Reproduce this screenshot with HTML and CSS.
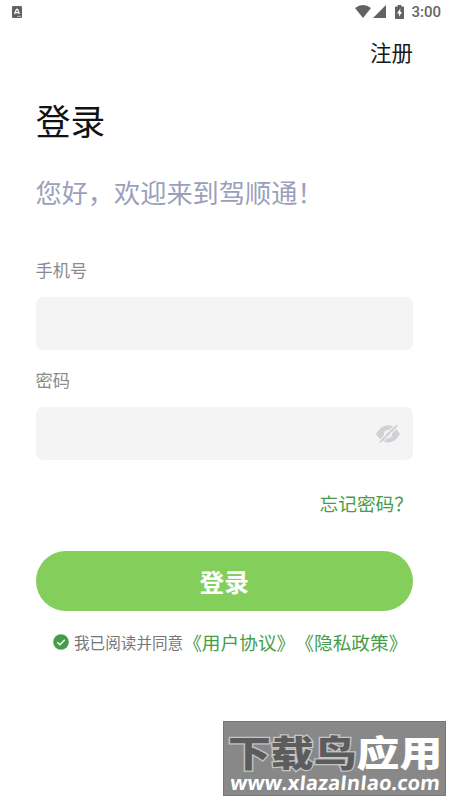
FILE: index.html
```html
<!DOCTYPE html>
<html lang="zh-CN">
<head>
<meta charset="utf-8">
<title>登录</title>
<link rel="stylesheet" href="styles.css">
</head>
<body>
<header class="status">
  <svg class="app-icon" viewBox="0 0 10 12"><rect width="10" height="12" rx="1.2" fill="#626262"/><path d="M2.6 8 4.4 3.4h1.2L7.4 8M3.3 6.7h3.4" fill="none" stroke="#fff" stroke-width="1.2"/><path d="M5 10.4h4" stroke="#ddd" stroke-width=".7"/></svg>
  <div class="status-right">
    <svg class="wifi" viewBox="0 0 16 13"><path d="M0 3Q8-3 16 3L8 13Z"/></svg>
    <svg class="signal" viewBox="0 0 13 13"><path d="M13 0V13H0Z"/></svg>
    <svg class="battery" viewBox="0 0 9 14"><path d="M2.7 0h3.6v1.4H8.2q.8 0 .8.8V13.2q0 .8-.8.8H.8q-.8 0-.8-.8V2.2q0-.8.8-.8H2.7Z"/><path d="M5.3 3.5 2 8.5h2v3.3L7 7H5.3Z" fill="#fff"/></svg>
    <span class="time">3:00</span>
  </div>
</header>
<main>
  <a class="register">注册</a>
  <h1>登录</h1>
  <p class="welcome">您好，欢迎来到驾顺通！</p>
  <label>手机号</label>
  <div class="field"></div>
  <label>密码</label>
  <div class="field">
    <svg class="eye" viewBox="0 0 24 20"><path d="M0 10Q5 1.3 12 1.3T24 10Q19 18.5 12 18.5T0 10Z" fill="#d0d1d7"/><circle cx="12" cy="10" r="4" fill="#f4f4f4"/><circle cx="12" cy="10" r="2.3" fill="#d0d1d7"/><path d="M2.5 17.3 19.7.3M5.3 19.3 22.5 2.3" stroke="#f4f4f4" stroke-width="1.1"/><path d="M3.9 18.4 21.2 1.2" stroke="#d0d1d7" stroke-width="1.9"/></svg>
  </div>
  <a class="forgot">忘记密码？</a>
  <div class="submit">登录</div>
  <div class="agree">
    <svg class="check" viewBox="0 0 16 16"><circle cx="8" cy="8" r="7.8" fill="#469d48"/><path d="M4.2 8.2 7 10.8 11.8 5.7" fill="none" stroke="#fff" stroke-width="1.4"/></svg>
    <span class="agree-text">我已阅读并同意</span><a>《用户协议》</a><a>《隐私政策》</a>
  </div>
</main>
<aside class="watermark">
  <div class="brand"><span class="brand-dark">下载鸟</span><span>应用</span></div>
  <div class="url">www.xIazaInIao.com</div>
</aside>
</body>
</html>
```
FILE: styles.css
```css
* { box-sizing: border-box; }
body { margin: 0; width: 449px; height: 800px; overflow: hidden; background: #fff; position: relative; font-family: "Noto Sans CJK SC", sans-serif; }
svg { display: block; flex: none; }
.status { height: 23px; display: flex; justify-content: space-between; align-items: center; padding: 0 8px 0 12px; }
.app-icon { width: 10px; height: 12px; }
.status-right { display: flex; align-items: center; fill: #626262; }
.wifi { width: 16px; height: 13px; }
.signal { width: 13px; height: 13px; margin-left: 2px; }
.battery { width: 9px; height: 14px; margin-left: 9px; }
.time { font: 500 15px/20px Roboto, sans-serif; color: #666; margin-left: 7px; }
main { padding: 13px 36px 0; display: flex; flex-direction: column; }
.register { align-self: flex-end; font-size: 21.5px; line-height: 32px; color: #17181a; }
h1 { margin: 27px 0 0 -0.3px; font-size: 34.7px; line-height: 50px; font-weight: 400; color: #111214; }
.welcome { margin: 27px 0 0 -0.5px; font-size: 26.2px; line-height: 40px; color: #9b9fbb; white-space: nowrap; }
label { margin: 46px 0 0 -0.5px; height: 24px; font-size: 17.3px; line-height: 24px; color: #8b8b8b; }
.field { margin: 15px 0 0 -0.5px; width: 377.5px; height: 53px; border-radius: 7px; background: #f4f4f4; display: flex; justify-content: flex-end; align-items: center; padding-right: 13px; }
.field + label { margin-top: 18px; }
.eye { width: 24px; height: 20px; margin-top: 1px; }
.forgot { align-self: flex-end; margin-top: 29px; font-size: 18.7px; line-height: 28px; color: #469d48; }
.submit { margin: 34px 0 0 -0.5px; width: 377.5px; height: 60px; border-radius: 30px; background: #84ce5c; color: #fff; font-size: 24.7px; font-weight: 700; line-height: 60px; text-align: center; }
.agree { margin: 17px 0 0 17px; display: flex; align-items: center; height: 28px; white-space: nowrap; }
.check { width: 16px; height: 16px; }
.agree-text { margin-left: 5px; font-size: 15.6px; line-height: 28px; color: #777; }
.agree a { font-size: 18.7px; line-height: 28px; color: #469d48; }
.watermark { position: absolute; left: 223px; top: 721px; width: 223px; height: 75px; background: #888; border: 1px solid #777; color: #fff; white-space: nowrap; }
.brand { margin: 9px 0 0 4px; width: 180px; font-size: 36px; line-height: 40px; font-weight: 900; transform: scaleX(1.19); transform-origin: 0 50%; }
.brand-dark { color: #5c5c5c; -webkit-text-stroke: 2.5px #c4c4c4; paint-order: stroke fill; }
.url { margin: -1px 0 0 5px; width: 211px; font: 700 20.2px/24px "Open Sans", sans-serif; transform: skewX(-6deg); transform-origin: 0 100%; }
```
